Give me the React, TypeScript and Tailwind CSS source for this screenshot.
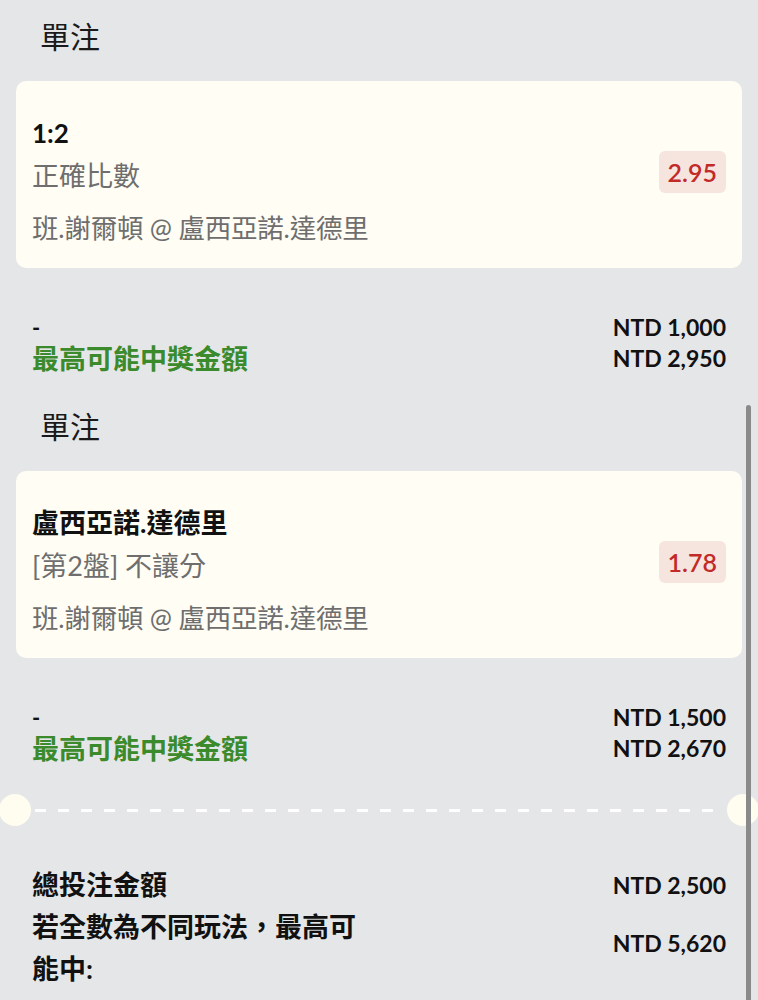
import React from "react";

const FONT = { fontFamily: "Lato, 'Noto Sans CJK TC', sans-serif" };

function Block({
  title,
  sub,
  match,
  odds,
  stake,
  win,
  bold,
}: {
  title: string;
  sub: string;
  match: string;
  odds: string;
  stake: string;
  win: string;
  bold?: boolean;
}) {
  return (
    <div>
      <div className="h-[72px] mb-[9px] pl-[40px] text-[30px] leading-[72px] text-[#1a1a1a]">單注</div>
      <div className="mx-[16px] h-[187px] rounded-[10px] bg-[#fffdf4] pl-[16px] pr-[16px] flex items-center">
        <div className="flex-1 self-start pt-[34px]">
          <div className={`h-[36px] leading-[36px] font-bold text-[#111] ${bold ? "text-[27px]" : "text-[26px]"}`}>{title}</div>
          <div className="mt-[5px] h-[40px] leading-[40px] text-[27px] text-[#6e6e6e]">{sub}</div>
          <div className="mt-[12px] h-[40px] leading-[40px] text-[26.5px] tracking-[-0.2px] text-[#6e6e6e]">{match}</div>
        </div>
        <div className="mt-[-5px] h-[42px] px-[9px] rounded-[6px] bg-[#f6e5de] text-[25px] font-semibold leading-[42px] text-[#c22a28]">
          {odds}
        </div>
      </div>
      <div className="pt-[44px] pb-[16px] px-[32px] flex justify-between">
        <div>
          <div className="h-[31px] leading-[31px] text-[22px] font-bold text-[#111]">-</div>
          <div className="h-[31px] leading-[31px] text-[27px] font-bold text-[#3b8a2b]">最高可能中獎金額</div>
        </div>
        <div className="text-right">
          <div className="h-[31px] leading-[31px] text-[23px] font-bold text-[#111]">{stake}</div>
          <div className="h-[31px] leading-[31px] text-[23px] font-bold text-[#111]">{win}</div>
        </div>
      </div>
    </div>
  );
}

export default function App() {
  return (
    <div className="relative w-[758px] h-[1000px] overflow-hidden bg-[#e5e6e8]" style={FONT}>
      <Block
        title="1:2"
        sub="正確比數"
        match="班.謝爾頓 @ 盧西亞諾.達德里"
        odds="2.95"
        stake="NTD 1,000"
        win="NTD 2,950"
      />
      <Block
        bold
        title="盧西亞諾.達德里"
        sub="[第2盤] 不讓分"
        match="班.謝爾頓 @ 盧西亞諾.達德里"
        odds="1.78"
        stake="NTD 1,500"
        win="NTD 2,670"
      />
      <div className="relative h-[60px] flex items-center">
        <div className="ml-[-1px] w-[32px] h-[32px] rounded-full bg-[#fffdf0] shrink-0" />
        <div className="flex-1 mx-[4px] h-[3px] bg-[repeating-linear-gradient(90deg,#ffffff_0_11px,transparent_11px_23px)]" />
        <div className="mr-[-1px] w-[32px] h-[32px] rounded-full bg-[#fffdf0] shrink-0" />
      </div>
      <div className="px-[32px] pt-[24px]">
        <div className="flex justify-between items-center h-[42px]">
          <div className="text-[27px] font-bold text-[#111] leading-[42px]">總投注金額</div>
          <div className="text-[23px] font-bold text-[#111]">NTD 2,500</div>
        </div>
        <div className="flex justify-between items-center">
          <div className="w-[340px] text-[27px] font-bold text-[#111] leading-[42px]">
            若全數為不同玩法，最高可能中:
          </div>
          <div className="text-[23px] font-bold text-[#111] mb-[10px]">NTD 5,620</div>
        </div>
      </div>
      <div className="absolute right-[7px] top-[405px] w-[5px] h-[620px] rounded-full bg-[#8a8a8a]" />
    </div>
  );
}
